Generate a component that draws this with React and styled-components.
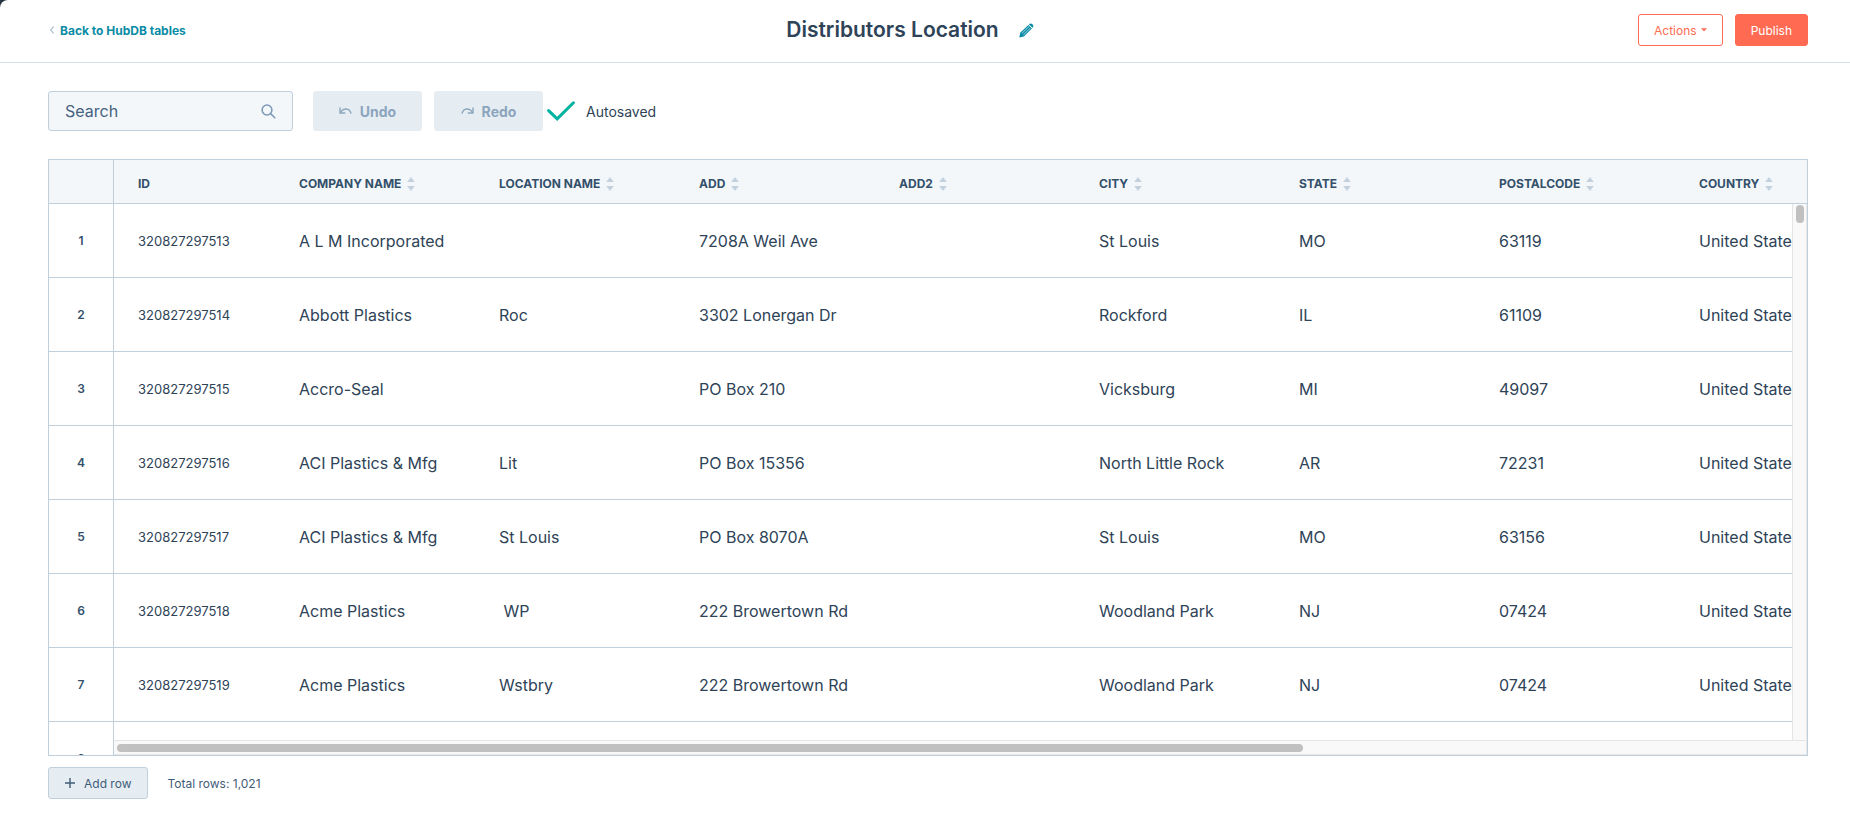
import React from 'react';
//Style
import styled, {createGlobalStyle} from 'styled-components';

const columns = [
    {key: 'company', label: 'Company Name'},
    {key: 'location', label: 'Location Name'},
    {key: 'add', label: 'Add'},
    {key: 'add2', label: 'Add2'},
    {key: 'city', label: 'City'},
    {key: 'state', label: 'State'},
    {key: 'postal', label: 'PostalCode'},
    {key: 'country', label: 'Country'},
];

const rows = [
    {id: '320827297513', company: 'A L M Incorporated', location: '', add: '7208A Weil Ave', city: 'St Louis', state: 'MO', postal: '63119', country: 'United States'},
    {id: '320827297514', company: 'Abbott Plastics', location: 'Roc', add: '3302 Lonergan Dr', city: 'Rockford', state: 'IL', postal: '61109', country: 'United States'},
    {id: '320827297515', company: 'Accro-Seal', location: '', add: 'PO Box 210', city: 'Vicksburg', state: 'MI', postal: '49097', country: 'United States'},
    {id: '320827297516', company: 'ACI Plastics & Mfg', location: 'Lit', add: 'PO Box 15356', city: 'North Little Rock', state: 'AR', postal: '72231', country: 'United States'},
    {id: '320827297517', company: 'ACI Plastics & Mfg', location: 'St Louis', add: 'PO Box 8070A', city: 'St Louis', state: 'MO', postal: '63156', country: 'United States'},
    {id: '320827297518', company: 'Acme Plastics', location: ' WP', add: '222 Browertown Rd', city: 'Woodland Park', state: 'NJ', postal: '07424', country: 'United States'},
    {id: '320827297519', company: 'Acme Plastics', location: 'Wstbry', add: '222 Browertown Rd', city: 'Woodland Park', state: 'NJ', postal: '07424', country: 'United States'},
    {},
];

const UndoIcon = () => (
    <svg width="13" height="10" viewBox="0 0 13 10" fill="none" stroke="currentColor" strokeWidth="1.4" aria-hidden="true">
        <path d="M1 1.5V7H6.2"/>
        <path d="M1.4 6.6C4.5 1.6 10.6 1.6 12 7.6"/>
    </svg>
);

const RedoIcon = () => (
    <svg width="13" height="10" viewBox="0 0 13 10" fill="none" stroke="currentColor" strokeWidth="1.4" aria-hidden="true">
        <path d="M12 1.5V7H6.8"/>
        <path d="M11.6 6.6C8.5 1.6 2.4 1.6 1 7.6"/>
    </svg>
);

const SortIcon = () => (
    <svg width="8" height="14" viewBox="0 0 8 14" fill="#c3d1de" aria-hidden="true">
        <path d="M4 0L7.8 5H0.2Z"/>
        <path d="M4 14L7.8 9H0.2Z"/>
    </svg>
);

const App = () => {
    return(
        <>
            <GlobalStyle/>
            <StyledPage>
                <StyledHeader>
                    <BackLink href="#tables">
                        <svg width="4" height="8" viewBox="0 0 4 8" fill="none" stroke="#a3b8ca" strokeWidth="1.1" aria-hidden="true">
                            <path d="M3.6 0.5L0.7 4L3.6 7.5"/>
                        </svg>
                        Back to HubDB tables
                    </BackLink>
                    <TitleGroup>
                        <h1>Distributors Location</h1>
                        <EditButton aria-label="Edit table name">
                            <svg width="15" height="15" viewBox="0 0 15 15" aria-hidden="true">
                                <path fill="#0a8ca6" d="M0.3 14.5L1.2 9.8L9.4 1.9L12.9 5.4L4.9 13.4ZM10.3 1.1C11.2 0.2 12.4 0.2 13.4 1.2C14.5 2.2 14.7 3.5 13.8 4.4L13.5 4.7L10 1.4Z"/>
                                <path stroke="#b5dde5" strokeWidth="0.9" d="M2.9 10.4L9.9 3.6M4.4 11.9L11.4 5.1"/>
                            </svg>
                        </EditButton>
                    </TitleGroup>
                    <HeaderActions>
                        <ActionButton>
                            Actions
                            <svg width="6" height="4" viewBox="0 0 6 4" fill="currentColor" aria-hidden="true">
                                <path d="M0 0.3H6L3 3.5Z"/>
                            </svg>
                        </ActionButton>
                        <ActionButton $primary>Publish</ActionButton>
                    </HeaderActions>
                </StyledHeader>
                <StyledMain>
                    <StyledToolbar>
                        <SearchBox>
                            <input type="text" placeholder="Search" aria-label="Search"/>
                            <svg width="15" height="15" viewBox="0 0 15 15" fill="none" stroke="#7c98b6" strokeWidth="1.5" aria-hidden="true">
                                <circle cx="6" cy="6" r="4.9"/>
                                <path d="M9.6 9.6L14.3 14.3"/>
                            </svg>
                        </SearchBox>
                        <HistoryButtons>
                            <HistoryButton disabled><UndoIcon/>Undo</HistoryButton>
                            <HistoryButton disabled><RedoIcon/>Redo</HistoryButton>
                        </HistoryButtons>
                        <SaveStatus>
                            <svg width="28" height="20" viewBox="0 0 28 20" fill="none" stroke="#00b3a1" strokeWidth="3" strokeLinecap="round" aria-hidden="true">
                                <path d="M1.6 9.6L10.2 17.8L26.4 1.8"/>
                            </svg>
                            Autosaved
                        </SaveStatus>
                    </StyledToolbar>
                    <TableFrame>
                        <StyledTable>
                            <colgroup>
                                <col width="65"/>
                                <col width="161"/>
                                {columns.slice(0, -1).map(({key}) => <col key={key} width="200"/>)}
                                <col/>
                            </colgroup>
                            <thead>
                                <tr>
                                    <NumberHead/>
                                    <HeadCell>ID</HeadCell>
                                    {columns.map(({key, label}) => (
                                        <HeadCell key={key}>
                                            <SortButton>{label}<SortIcon/></SortButton>
                                        </HeadCell>
                                    ))}
                                </tr>
                            </thead>
                            <tbody>
                                {rows.map((row, i) => (
                                    <tr key={i}>
                                        <RowNumber scope="row">{i + 1}</RowNumber>
                                        <Cell $small>{row.id}</Cell>
                                        {columns.map(({key}) => <Cell key={key}>{row[key]}</Cell>)}
                                    </tr>
                                ))}
                            </tbody>
                        </StyledTable>
                        <VerticalTrack><VerticalThumb/></VerticalTrack>
                        <HorizontalTrack><HorizontalThumb/></HorizontalTrack>
                    </TableFrame>
                    <StyledFooter>
                        <AddButton>
                            <svg width="10" height="10" viewBox="0 0 10 10" stroke="currentColor" strokeWidth="1.4" aria-hidden="true">
                                <path d="M5 0V10M0 5H10"/>
                            </svg>
                            Add row
                        </AddButton>
                        <span>Total rows: 1,021</span>
                    </StyledFooter>
                </StyledMain>
            </StyledPage>
        </>
    );
};

const GlobalStyle = createGlobalStyle`
    * {
        box-sizing: border-box;
        margin: 0;
        padding: 0;
    }
    body {
        background: #253342;
        color: #2e4357;
        font-family: 'Inter', 'Liberation Sans', sans-serif;
        font-size: 16px;
        font-weight: 400;
    }
    button, input {
        font: inherit;
        color: inherit;
    }
    svg {
        flex: none;
    }
`;

const StyledPage = styled.div`
    display: flex;
    flex-direction: column;
    height: 100vh;
    background: #ffffff;
    border-top-left-radius: 8px;
`;

//Header
const StyledHeader = styled.header`
    display: grid;
    grid-template-columns: 1fr auto 1fr;
    align-items: center;
    padding: 14px 42px 16px 48px;
    border-bottom: 1px solid #d6dfe6;
`;

const BackLink = styled.a`
    display: flex;
    align-items: center;
    gap: 6px;
    padding-left: 2px;
    color: #0a8ca6;
    font-size: 12px;
    font-weight: 700;
    text-decoration: none;
`;

const TitleGroup = styled.div`
    display: flex;
    align-items: center;
    h1 {
        font-size: 21px;
        font-weight: 600;
        line-height: 32px;
    }
`;

const EditButton = styled.button`
    display: flex;
    padding: 8px 36px 8px 20px;
    border: none;
    background: none;
`;

const HeaderActions = styled.div`
    display: flex;
    justify-content: flex-end;
    gap: 12px;
`;

const ActionButton = styled.button`
    display: flex;
    align-items: center;
    gap: 4px;
    height: 32px;
    padding: 0 15px;
    border: 1px solid #ff6b52;
    border-radius: 3px;
    background: ${({$primary}) => $primary ? '#ff6b52' : '#ffffff'};
    color: ${({$primary}) => $primary ? '#ffffff' : '#ff6b52'};
    font-size: 12px;
`;

//Toolbar
const StyledMain = styled.main`
    display: flex;
    flex-direction: column;
    flex: 1;
    min-height: 0;
    padding: 28px 42px 19px 48px;
`;

const StyledToolbar = styled.div`
    display: flex;
    align-items: center;
    padding-bottom: 28px;
`;

const SearchBox = styled.div`
    display: flex;
    align-items: center;
    width: 245px;
    height: 40px;
    padding: 0 16px;
    border: 1px solid #c0cfdc;
    border-radius: 3px;
    background: #f3f7fa;
    input {
        flex: 1;
        min-width: 0;
        border: none;
        outline: none;
        background: none;
    }
    input::placeholder {
        color: #46627f;
        opacity: 1;
    }
`;

const HistoryButtons = styled.div`
    display: flex;
    gap: 12px;
    margin-left: 20px;
`;

const HistoryButton = styled.button`
    display: flex;
    align-items: center;
    justify-content: center;
    gap: 8px;
    width: 109px;
    height: 40px;
    border: none;
    border-radius: 3px;
    background: #e5edf3;
    color: #8ca5bd;
    font-size: 14px;
    font-weight: 700;
`;

const SaveStatus = styled.div`
    display: flex;
    align-items: center;
    gap: 11px;
    padding-left: 4px;
    font-size: 14px;
`;

//Table
const TableFrame = styled.div`
    position: relative;
    flex: 1;
    min-height: 0;
    overflow: hidden;
    border: 1px solid #c0cfdc;
`;

const StyledTable = styled.table`
    width: 100%;
    table-layout: fixed;
    border-collapse: separate;
    border-spacing: 0;
    text-align: left;
`;

const HeadCell = styled.th`
    height: 44px;
    padding: 4px 0 0 24px;
    border-bottom: 1px solid #c0cfdc;
    background: #f3f7fa;
    color: #33506a;
    font-size: 12px;
    font-weight: 700;
    text-transform: uppercase;
    white-space: nowrap;
`;

const NumberHead = styled(HeadCell)`
    border-right: 1px solid #c0cfdc;
`;

const SortButton = styled.button`
    display: flex;
    align-items: center;
    gap: 6px;
    border: none;
    background: none;
    text-transform: inherit;
`;

const Cell = styled.td`
    height: 74px;
    padding-left: 24px;
    border-bottom: 1px solid #c0cfdc;
    font-size: ${({$small}) => $small ? '13px' : '16px'};
    white-space: pre;
`;

const RowNumber = styled.th`
    border-right: 1px solid #c0cfdc;
    border-bottom: 1px solid #c0cfdc;
    color: #33506a;
    font-size: 12px;
    font-weight: 600;
    text-align: center;
`;

//Scrollbars lie over the table edges
const VerticalTrack = styled.div`
    position: absolute;
    top: 44px;
    right: 0;
    bottom: 0;
    width: 15px;
    padding: 1px 2px 1px 3px;
    border-left: 1px solid #e3e5e7;
    border-right: 1px solid #e8e8e8;
    background: #f9f9f9;
`;

const VerticalThumb = styled.div`
    height: 18px;
    border-radius: 4px;
    background: #c0c0c0;
`;

const HorizontalTrack = styled.div`
    position: absolute;
    left: 65px;
    right: 1px;
    bottom: 0;
    height: 15px;
    padding: 3px;
    border-top: 1px solid #e3e5e7;
    border-bottom: 1px solid #e8e8e8;
    background: #f9f9f9;
`;

const HorizontalThumb = styled.div`
    width: calc(70% + 6px);
    height: 8px;
    border-radius: 4px;
    background: #c0c0c0;
`;

//Footer
const StyledFooter = styled.footer`
    display: flex;
    align-items: center;
    gap: 19px;
    padding-top: 11px;
    color: #3f5c78;
    font-size: 12px;
`;

const AddButton = styled.button`
    display: flex;
    align-items: center;
    gap: 9px;
    height: 32px;
    padding: 0 16px;
    border: 1px solid #c0cfdc;
    border-radius: 3px;
    background: #e5edf3;
`;

export default App;
